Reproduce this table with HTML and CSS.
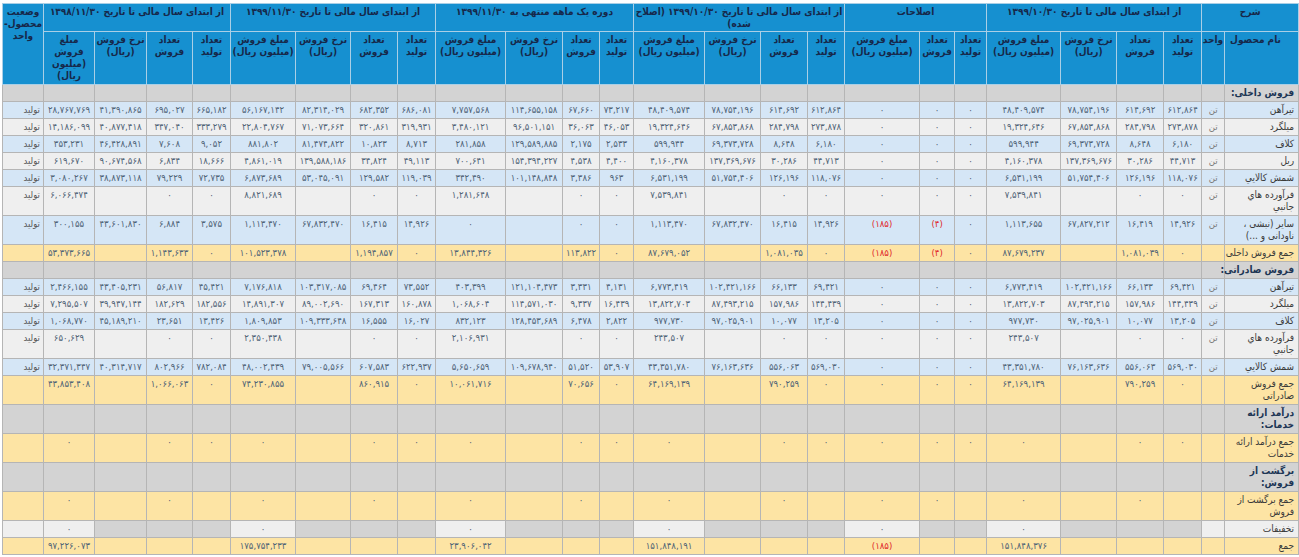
FILE: index.html
```html
<!DOCTYPE html>
<html lang="fa">
<head>
<meta charset="utf-8">
<title>گزارش فعالیت ماهانه</title>
<link rel="stylesheet" href="styles.css">
</head>
<body>
<table class="report">
<colgroup>
<col class="w74"><col class="w23"><col class="w38"><col class="w47"><col class="w56"><col class="w74">
<col class="w32"><col class="w35"><col class="w75">
<col class="w37"><col class="w47"><col class="w56"><col class="w71">
<col class="w34"><col class="w37"><col class="w57"><col class="w70">
<col class="w38"><col class="w47"><col class="w55"><col class="w65">
<col class="w38"><col class="w46"><col class="w52"><col class="w51">
<col class="w41">
</colgroup>
<thead>
<tr class="hr1">
<th colspan="2">شرح</th>
<th colspan="4">از ابتدای سال مالی تا تاریخ ۱۳۹۹/۱۰/۳۰</th>
<th colspan="3">اصلاحات</th>
<th colspan="4" class="wrap">از ابتدای سال مالی تا تاریخ ۱۳۹۹/۱۰/۳۰ (اصلاح شده)</th>
<th colspan="4">دوره یک ماهه منتهی به ۱۳۹۹/۱۱/۳۰</th>
<th colspan="4">از ابتدای سال مالی تا تاریخ ۱۳۹۹/۱۱/۳۰</th>
<th colspan="4">از ابتدای سال مالی تا تاریخ ۱۳۹۸/۱۱/۳۰</th>
<th rowspan="2">وضعیت<br>محصول-<br>واحد</th>
</tr>
<tr class="hr2">
<th class="lft">نام محصول</th><th>واحد</th>
<th>تعداد<br>تولید</th><th>تعداد<br>فروش</th><th>نرخ فروش<br>(ریال)</th><th>مبلغ فروش<br>(میلیون ریال)</th>
<th>تعداد<br>تولید</th><th>تعداد<br>فروش</th><th>مبلغ فروش<br>(میلیون ریال)</th>
<th>تعداد<br>تولید</th><th>تعداد<br>فروش</th><th>نرخ فروش<br>(ریال)</th><th>مبلغ فروش<br>(میلیون ریال)</th>
<th>تعداد<br>تولید</th><th>تعداد<br>فروش</th><th>نرخ فروش<br>(ریال)</th><th>مبلغ فروش<br>(میلیون ریال)</th>
<th>تعداد<br>تولید</th><th>تعداد<br>فروش</th><th>نرخ فروش<br>(ریال)</th><th>مبلغ فروش<br>(میلیون ریال)</th>
<th>تعداد<br>تولید</th><th>تعداد<br>فروش</th><th>نرخ فروش<br>(ریال)</th><th>مبلغ<br>فروش<br>(میلیون<br>ریال)</th>
</tr>
</thead>
<tbody>
<tr class="s"><td class="name sec">فروش داخلی:</td><td></td><td></td><td></td><td></td><td></td><td></td><td></td><td></td><td></td><td></td><td></td><td></td><td></td><td></td><td></td><td></td><td></td><td></td><td></td><td></td><td></td><td></td><td></td><td></td><td></td></tr>

<tr class="b"><td class="name">تیرآهن</td><td class="u">تن</td><td>۶۱۲,۸۶۴</td><td>۶۱۴,۶۹۲</td><td>۷۸,۷۵۴,۱۹۶</td><td>۴۸,۴۰۹,۵۷۴</td><td>۰</td><td>۰</td><td>۰</td><td>۶۱۲,۸۶۴</td><td>۶۱۴,۶۹۲</td><td>۷۸,۷۵۴,۱۹۶</td><td>۴۸,۴۰۹,۵۷۴</td><td>۷۳,۲۱۷</td><td>۶۷,۶۶۰</td><td>۱۱۴,۶۵۵,۱۵۸</td><td>۷,۷۵۷,۵۶۸</td><td>۶۸۶,۰۸۱</td><td>۶۸۲,۳۵۲</td><td>۸۲,۳۱۴,۰۲۹</td><td>۵۶,۱۶۷,۱۴۲</td><td>۶۶۵,۱۸۲</td><td>۶۹۵,۰۲۷</td><td>۴۱,۳۹۰,۸۶۵</td><td>۲۸,۷۶۷,۷۶۹</td><td class="st">تولید</td></tr>

<tr class="g"><td class="name">میلگرد</td><td class="u">تن</td><td>۲۷۳,۸۷۸</td><td>۲۸۴,۷۹۸</td><td>۶۷,۸۵۳,۸۶۸</td><td>۱۹,۳۲۴,۶۴۶</td><td>۰</td><td>۰</td><td>۰</td><td>۲۷۳,۸۷۸</td><td>۲۸۴,۷۹۸</td><td>۶۷,۸۵۳,۸۶۸</td><td>۱۹,۳۲۴,۶۴۶</td><td>۴۶,۰۵۳</td><td>۳۶,۰۶۳</td><td>۹۶,۵۰۱,۱۵۱</td><td>۳,۴۸۰,۱۲۱</td><td>۳۱۹,۹۳۱</td><td>۳۲۰,۸۶۱</td><td>۷۱,۰۷۳,۶۶۴</td><td>۲۲,۸۰۴,۷۶۷</td><td>۳۳۳,۲۷۹</td><td>۳۴۷,۰۴۰</td><td>۴۰,۸۷۷,۴۱۸</td><td>۱۴,۱۸۶,۰۹۹</td><td class="st">تولید</td></tr>

<tr class="b"><td class="name">کلاف</td><td class="u">تن</td><td>۶,۱۸۰</td><td>۸,۶۴۸</td><td>۶۹,۳۷۳,۷۲۸</td><td>۵۹۹,۹۴۴</td><td>۰</td><td>۰</td><td>۰</td><td>۶,۱۸۰</td><td>۸,۶۴۸</td><td>۶۹,۳۷۳,۷۲۸</td><td>۵۹۹,۹۴۴</td><td>۲,۵۳۳</td><td>۲,۱۷۵</td><td>۱۲۹,۵۸۹,۸۸۵</td><td>۲۸۱,۸۵۸</td><td>۸,۷۱۳</td><td>۱۰,۸۲۳</td><td>۸۱,۴۷۴,۸۲۲</td><td>۸۸۱,۸۰۲</td><td>۹,۰۵۲</td><td>۷,۶۰۸</td><td>۴۶,۴۲۸,۸۹۱</td><td>۳۵۳,۲۳۱</td><td class="st">تولید</td></tr>

<tr class="g"><td class="name">ریل</td><td class="u">تن</td><td>۴۴,۷۱۳</td><td>۳۰,۲۸۶</td><td>۱۳۷,۳۶۹,۶۷۶</td><td>۴,۱۶۰,۳۷۸</td><td>۰</td><td>۰</td><td>۰</td><td>۴۴,۷۱۳</td><td>۳۰,۲۸۶</td><td>۱۳۷,۳۶۹,۶۷۶</td><td>۴,۱۶۰,۳۷۸</td><td>۴,۴۰۰</td><td>۴,۵۳۸</td><td>۱۵۴,۳۹۴,۲۲۷</td><td>۷۰۰,۶۴۱</td><td>۴۹,۱۱۳</td><td>۳۴,۸۲۴</td><td>۱۳۹,۵۸۸,۱۸۶</td><td>۴,۸۶۱,۰۱۹</td><td>۱۸,۶۶۶</td><td>۶,۸۳۴</td><td>۹۰,۶۷۴,۵۶۸</td><td>۶۱۹,۶۷۰</td><td class="st">تولید</td></tr>

<tr class="b"><td class="name">شمش كالايي</td><td class="u">تن</td><td>۱۱۸,۰۷۶</td><td>۱۲۶,۱۹۶</td><td>۵۱,۷۵۴,۴۰۶</td><td>۶,۵۳۱,۱۹۹</td><td>۰</td><td>۰</td><td>۰</td><td>۱۱۸,۰۷۶</td><td>۱۲۶,۱۹۶</td><td>۵۱,۷۵۴,۴۰۶</td><td>۶,۵۳۱,۱۹۹</td><td>۹۶۳</td><td>۳,۳۸۶</td><td>۱۰۱,۱۴۸,۸۴۸</td><td>۳۴۲,۴۹۰</td><td>۱۱۹,۰۳۹</td><td>۱۲۹,۵۸۲</td><td>۵۳,۰۴۵,۰۹۱</td><td>۶,۸۷۳,۶۸۹</td><td>۷۲,۷۳۵</td><td>۷۹,۲۲۹</td><td>۳۸,۸۷۳,۱۱۸</td><td>۳,۰۸۰,۲۶۷</td><td class="st">تولید</td></tr>

<tr class="g"><td class="name">فرآورده هاي<br>جانبي</td><td class="u">تن</td><td>۰</td><td>۰</td><td></td><td>۷,۵۳۹,۸۴۱</td><td>۰</td><td>۰</td><td>۰</td><td>۰</td><td>۰</td><td></td><td>۷,۵۳۹,۸۴۱</td><td>۰</td><td>۰</td><td></td><td>۱,۲۸۱,۶۴۸</td><td>۰</td><td>۰</td><td></td><td>۸,۸۲۱,۶۸۹</td><td>۰</td><td>۰</td><td></td><td>۶,۰۶۶,۴۷۴</td><td class="st">تولید</td></tr>

<tr class="b"><td class="name">سایر (نبشی ،<br>ناودانی و ...)</td><td class="u">تن</td><td>۱۴,۹۲۶</td><td>۱۶,۴۱۹</td><td>۶۷,۸۲۷,۲۱۲</td><td>۱,۱۱۳,۶۵۵</td><td>۰</td><td class="neg">(۴)</td><td class="neg">(۱۸۵)</td><td>۱۴,۹۲۶</td><td>۱۶,۴۱۵</td><td>۶۷,۸۳۲,۴۷۰</td><td>۱,۱۱۳,۴۷۰</td><td>۰</td><td>۰</td><td></td><td>۰</td><td>۱۴,۹۲۶</td><td>۱۶,۴۱۵</td><td>۶۷,۸۳۲,۴۷۰</td><td>۱,۱۱۳,۴۷۰</td><td>۳,۵۷۵</td><td>۶,۸۸۴</td><td>۴۳,۶۰۱,۸۳۰</td><td>۳۰۰,۱۵۵</td><td class="st">تولید</td></tr>

<tr class="y"><td class="name">جمع فروش داخلی</td><td></td><td>۰</td><td>۱,۰۸۱,۰۳۹</td><td></td><td>۸۷,۶۷۹,۲۳۷</td><td>۰</td><td class="neg">(۴)</td><td class="neg">(۱۸۵)</td><td>۰</td><td>۱,۰۸۱,۰۳۵</td><td></td><td>۸۷,۶۷۹,۰۵۲</td><td>۰</td><td>۱۱۳,۸۲۲</td><td></td><td>۱۳,۸۴۴,۳۲۶</td><td>۰</td><td>۱,۱۹۴,۸۵۷</td><td></td><td>۱۰۱,۵۲۳,۳۷۸</td><td>۰</td><td>۱,۱۴۳,۶۳۳</td><td></td><td>۵۳,۳۷۳,۶۶۵</td><td></td></tr>

<tr class="s"><td class="name sec">فروش صادراتی:</td><td></td><td></td><td></td><td></td><td></td><td></td><td></td><td></td><td></td><td></td><td></td><td></td><td></td><td></td><td></td><td></td><td></td><td></td><td></td><td></td><td></td><td></td><td></td><td></td><td></td></tr>

<tr class="b"><td class="name">تیرآهن</td><td class="u">تن</td><td>۶۹,۴۲۱</td><td>۶۶,۱۳۳</td><td>۱۰۲,۴۲۱,۱۶۶</td><td>۶,۷۷۳,۴۱۹</td><td>۰</td><td>۰</td><td>۰</td><td>۶۹,۴۲۱</td><td>۶۶,۱۳۳</td><td>۱۰۲,۴۲۱,۱۶۶</td><td>۶,۷۷۳,۴۱۹</td><td>۴,۱۳۱</td><td>۳,۳۳۱</td><td>۱۲۱,۱۰۴,۴۷۳</td><td>۴۰۳,۳۹۹</td><td>۷۳,۵۵۲</td><td>۶۹,۴۶۴</td><td>۱۰۳,۳۱۷,۰۸۵</td><td>۷,۱۷۶,۸۱۸</td><td>۴۵,۴۲۱</td><td>۵۶,۸۱۷</td><td>۴۳,۴۰۵,۲۳۱</td><td>۲,۴۶۶,۱۵۵</td><td class="st">تولید</td></tr>

<tr class="g"><td class="name">میلگرد</td><td class="u">تن</td><td>۱۴۴,۴۳۹</td><td>۱۵۷,۹۸۶</td><td>۸۷,۴۹۳,۲۱۵</td><td>۱۳,۸۲۲,۷۰۳</td><td>۰</td><td>۰</td><td>۰</td><td>۱۴۴,۴۳۹</td><td>۱۵۷,۹۸۶</td><td>۸۷,۴۹۳,۲۱۵</td><td>۱۳,۸۲۲,۷۰۳</td><td>۱۶,۴۳۹</td><td>۹,۳۳۷</td><td>۱۱۴,۵۷۱,۰۳۰</td><td>۱,۰۶۸,۶۰۴</td><td>۱۶۰,۸۷۸</td><td>۱۶۷,۳۱۳</td><td>۸۹,۰۰۲,۶۹۰</td><td>۱۴,۸۹۱,۳۰۷</td><td>۱۸۲,۵۵۶</td><td>۱۸۲,۶۲۹</td><td>۳۹,۹۴۷,۱۴۴</td><td>۷,۲۹۵,۵۰۷</td><td class="st">تولید</td></tr>

<tr class="b"><td class="name">کلاف</td><td class="u">تن</td><td>۱۳,۲۰۵</td><td>۱۰,۰۷۷</td><td>۹۷,۰۲۵,۹۰۱</td><td>۹۷۷,۷۳۰</td><td>۰</td><td>۰</td><td>۰</td><td>۱۳,۲۰۵</td><td>۱۰,۰۷۷</td><td>۹۷,۰۲۵,۹۰۱</td><td>۹۷۷,۷۳۰</td><td>۲,۸۲۲</td><td>۶,۴۷۸</td><td>۱۲۸,۴۵۳,۶۸۹</td><td>۸۳۲,۱۲۳</td><td>۱۶,۰۲۷</td><td>۱۶,۵۵۵</td><td>۱۰۹,۳۳۳,۶۴۸</td><td>۱,۸۰۹,۸۵۳</td><td>۱۳,۴۲۶</td><td>۲۳,۶۵۱</td><td>۴۵,۱۸۹,۲۱۰</td><td>۱,۰۶۸,۷۷۰</td><td class="st">تولید</td></tr>

<tr class="g"><td class="name">فرآورده هاي<br>جانبي</td><td class="u">تن</td><td>۰</td><td>۰</td><td></td><td>۲۴۳,۵۰۷</td><td>۰</td><td>۰</td><td>۰</td><td>۰</td><td>۰</td><td></td><td>۲۴۳,۵۰۷</td><td>۰</td><td>۰</td><td></td><td>۲,۱۰۶,۹۳۱</td><td>۰</td><td>۰</td><td></td><td>۲,۳۵۰,۴۳۸</td><td>۰</td><td>۰</td><td></td><td>۶۵۰,۶۲۹</td><td class="st">تولید</td></tr>

<tr class="b"><td class="name">شمش كالايي</td><td class="u">تن</td><td>۵۶۹,۰۳۰</td><td>۵۵۶,۰۶۳</td><td>۷۶,۱۶۳,۶۳۶</td><td>۴۳,۳۵۱,۷۸۰</td><td>۰</td><td>۰</td><td>۰</td><td>۵۶۹,۰۳۰</td><td>۵۵۶,۰۶۳</td><td>۷۶,۱۶۳,۶۳۶</td><td>۴۳,۳۵۱,۷۸۰</td><td>۵۳,۹۰۷</td><td>۵۱,۵۲۰</td><td>۱۰۹,۶۷۸,۹۴۰</td><td>۵,۶۵۰,۶۵۹</td><td>۶۲۲,۹۳۷</td><td>۶۰۷,۵۸۳</td><td>۷۹,۰۰۵,۵۶۶</td><td>۴۸,۰۰۲,۴۳۹</td><td>۷۸۲,۰۸۴</td><td>۸۰۲,۹۶۶</td><td>۴۰,۳۱۴,۷۱۷</td><td>۳۲,۳۷۱,۳۴۷</td><td class="st">تولید</td></tr>

<tr class="y"><td class="name">جمع فروش<br>صادراتی</td><td></td><td>۰</td><td>۷۹۰,۲۵۹</td><td></td><td>۶۴,۱۶۹,۱۳۹</td><td>۰</td><td>۰</td><td>۰</td><td>۰</td><td>۷۹۰,۲۵۹</td><td></td><td>۶۴,۱۶۹,۱۳۹</td><td>۰</td><td>۷۰,۶۵۶</td><td></td><td>۱۰,۰۶۱,۷۱۶</td><td>۰</td><td>۸۶۰,۹۱۵</td><td></td><td>۷۴,۲۳۰,۸۵۵</td><td>۰</td><td>۱,۰۶۶,۰۶۳</td><td></td><td>۴۳,۸۵۳,۴۰۸</td><td></td></tr>

<tr class="s"><td class="name sec">درآمد ارائه<br>خدمات:</td><td></td><td></td><td></td><td></td><td></td><td></td><td></td><td></td><td></td><td></td><td></td><td></td><td></td><td></td><td></td><td></td><td></td><td></td><td></td><td></td><td></td><td></td><td></td><td></td><td></td></tr>

<tr class="y"><td class="name">جمع درآمد ارائه<br>خدمات</td><td></td><td>۰</td><td>۰</td><td></td><td>۰</td><td>۰</td><td>۰</td><td>۰</td><td>۰</td><td>۰</td><td></td><td>۰</td><td>۰</td><td>۰</td><td></td><td>۰</td><td>۰</td><td>۰</td><td></td><td>۰</td><td>۰</td><td>۰</td><td></td><td>۰</td><td></td></tr>

<tr class="s"><td class="name sec">برگشت از<br>فروش:</td><td></td><td></td><td></td><td></td><td></td><td></td><td></td><td></td><td></td><td></td><td></td><td></td><td></td><td></td><td></td><td></td><td></td><td></td><td></td><td></td><td></td><td></td><td></td><td></td><td></td></tr>

<tr class="y"><td class="name">جمع برگشت از<br>فروش</td><td></td><td></td><td>۰</td><td></td><td>۰</td><td></td><td>۰</td><td>۰</td><td></td><td>۰</td><td></td><td>۰</td><td></td><td>۰</td><td></td><td>۰</td><td></td><td>۰</td><td></td><td>۰</td><td></td><td>۰</td><td></td><td>۰</td><td></td></tr>

<tr class="g"><td class="name">تخفیفات</td><td></td><td class="off"></td><td class="off"></td><td class="off"></td><td>۰</td><td class="off"></td><td class="off"></td><td>۰</td><td class="off"></td><td class="off"></td><td class="off"></td><td>۰</td><td class="off"></td><td class="off"></td><td class="off"></td><td>۰</td><td class="off"></td><td class="off"></td><td class="off"></td><td>۰</td><td class="off"></td><td class="off"></td><td class="off"></td><td>۰</td><td></td></tr>

<tr class="y"><td class="name">جمع</td><td></td><td></td><td></td><td></td><td>۱۵۱,۸۴۸,۳۷۶</td><td></td><td></td><td class="neg">(۱۸۵)</td><td></td><td></td><td></td><td>۱۵۱,۸۴۸,۱۹۱</td><td></td><td></td><td></td><td>۲۳,۹۰۶,۰۴۲</td><td></td><td></td><td></td><td>۱۷۵,۷۵۴,۲۳۳</td><td></td><td></td><td></td><td>۹۷,۲۲۶,۰۷۳</td><td></td></tr>
</tbody>
</table>
</body>
</html>
```

FILE: styles.css
```css
html, body {
  margin: 0;
  padding: 0;
  background: #ffffff;
}

body {
  font-family: "DejaVu Sans Condensed", "DejaVu Sans", sans-serif;
  font-size: 9.5px;
  color: #4f6376;
}

.report {
  direction: rtl;
  border-collapse: collapse;
  table-layout: fixed;
  width: 1296px;
  margin: 3px 1px 0 2px;
}

.w23 { width: 23px; } .w32 { width: 32px; } .w34 { width: 34px; } .w35 { width: 35px; }
.w37 { width: 37px; } .w38 { width: 38px; } .w41 { width: 41px; } .w46 { width: 46px; }
.w47 { width: 47px; } .w51 { width: 51px; } .w52 { width: 52px; } .w55 { width: 55px; }
.w56 { width: 56px; } .w57 { width: 57px; } .w65 { width: 65px; } .w70 { width: 70px; }
.w71 { width: 71px; } .w74 { width: 74px; } .w75 { width: 75px; }

.report th {
  background: #1690d0;
  color: #16284a;
  font-weight: bold;
  font-size: 10px;
  line-height: 12px;
  text-align: center;
  vertical-align: top;
  white-space: nowrap;
  padding: 2px 1px 1px;
  border: 1px solid #a9cfe6;
}

.report th.wrap { white-space: normal; }
.report .hr1 { height: 28px; }
.report .hr2 { height: 53px; }
.report th.lft { text-align: left; padding-left: 5px; }

.report td {
  border: 1px solid #b5b5b5;
  padding: 2px 2px;
  line-height: 12px;
  text-align: center;
  vertical-align: top;
  white-space: nowrap;
}

.report td.name {
  text-align: right;
  color: #3a3a3a;
  font-size: 10px;
  padding-right: 4px;
}

.report td.sec {
  color: #1d3655;
  font-weight: bold;
  font-size: 10px;
}

.report td.u { color: #7a7a7a; }
.report td.st { text-align: right; color: #555; padding-right: 3px; }
.report td.neg { color: #e0262a; }

.b td { background: #d5e6f6; }
.g td { background: #efefef; }
.y td { background: #fde4a4; }
.s td { background: #d3d3d3; }
.report td.off { background: #d3d3d3; }
```
